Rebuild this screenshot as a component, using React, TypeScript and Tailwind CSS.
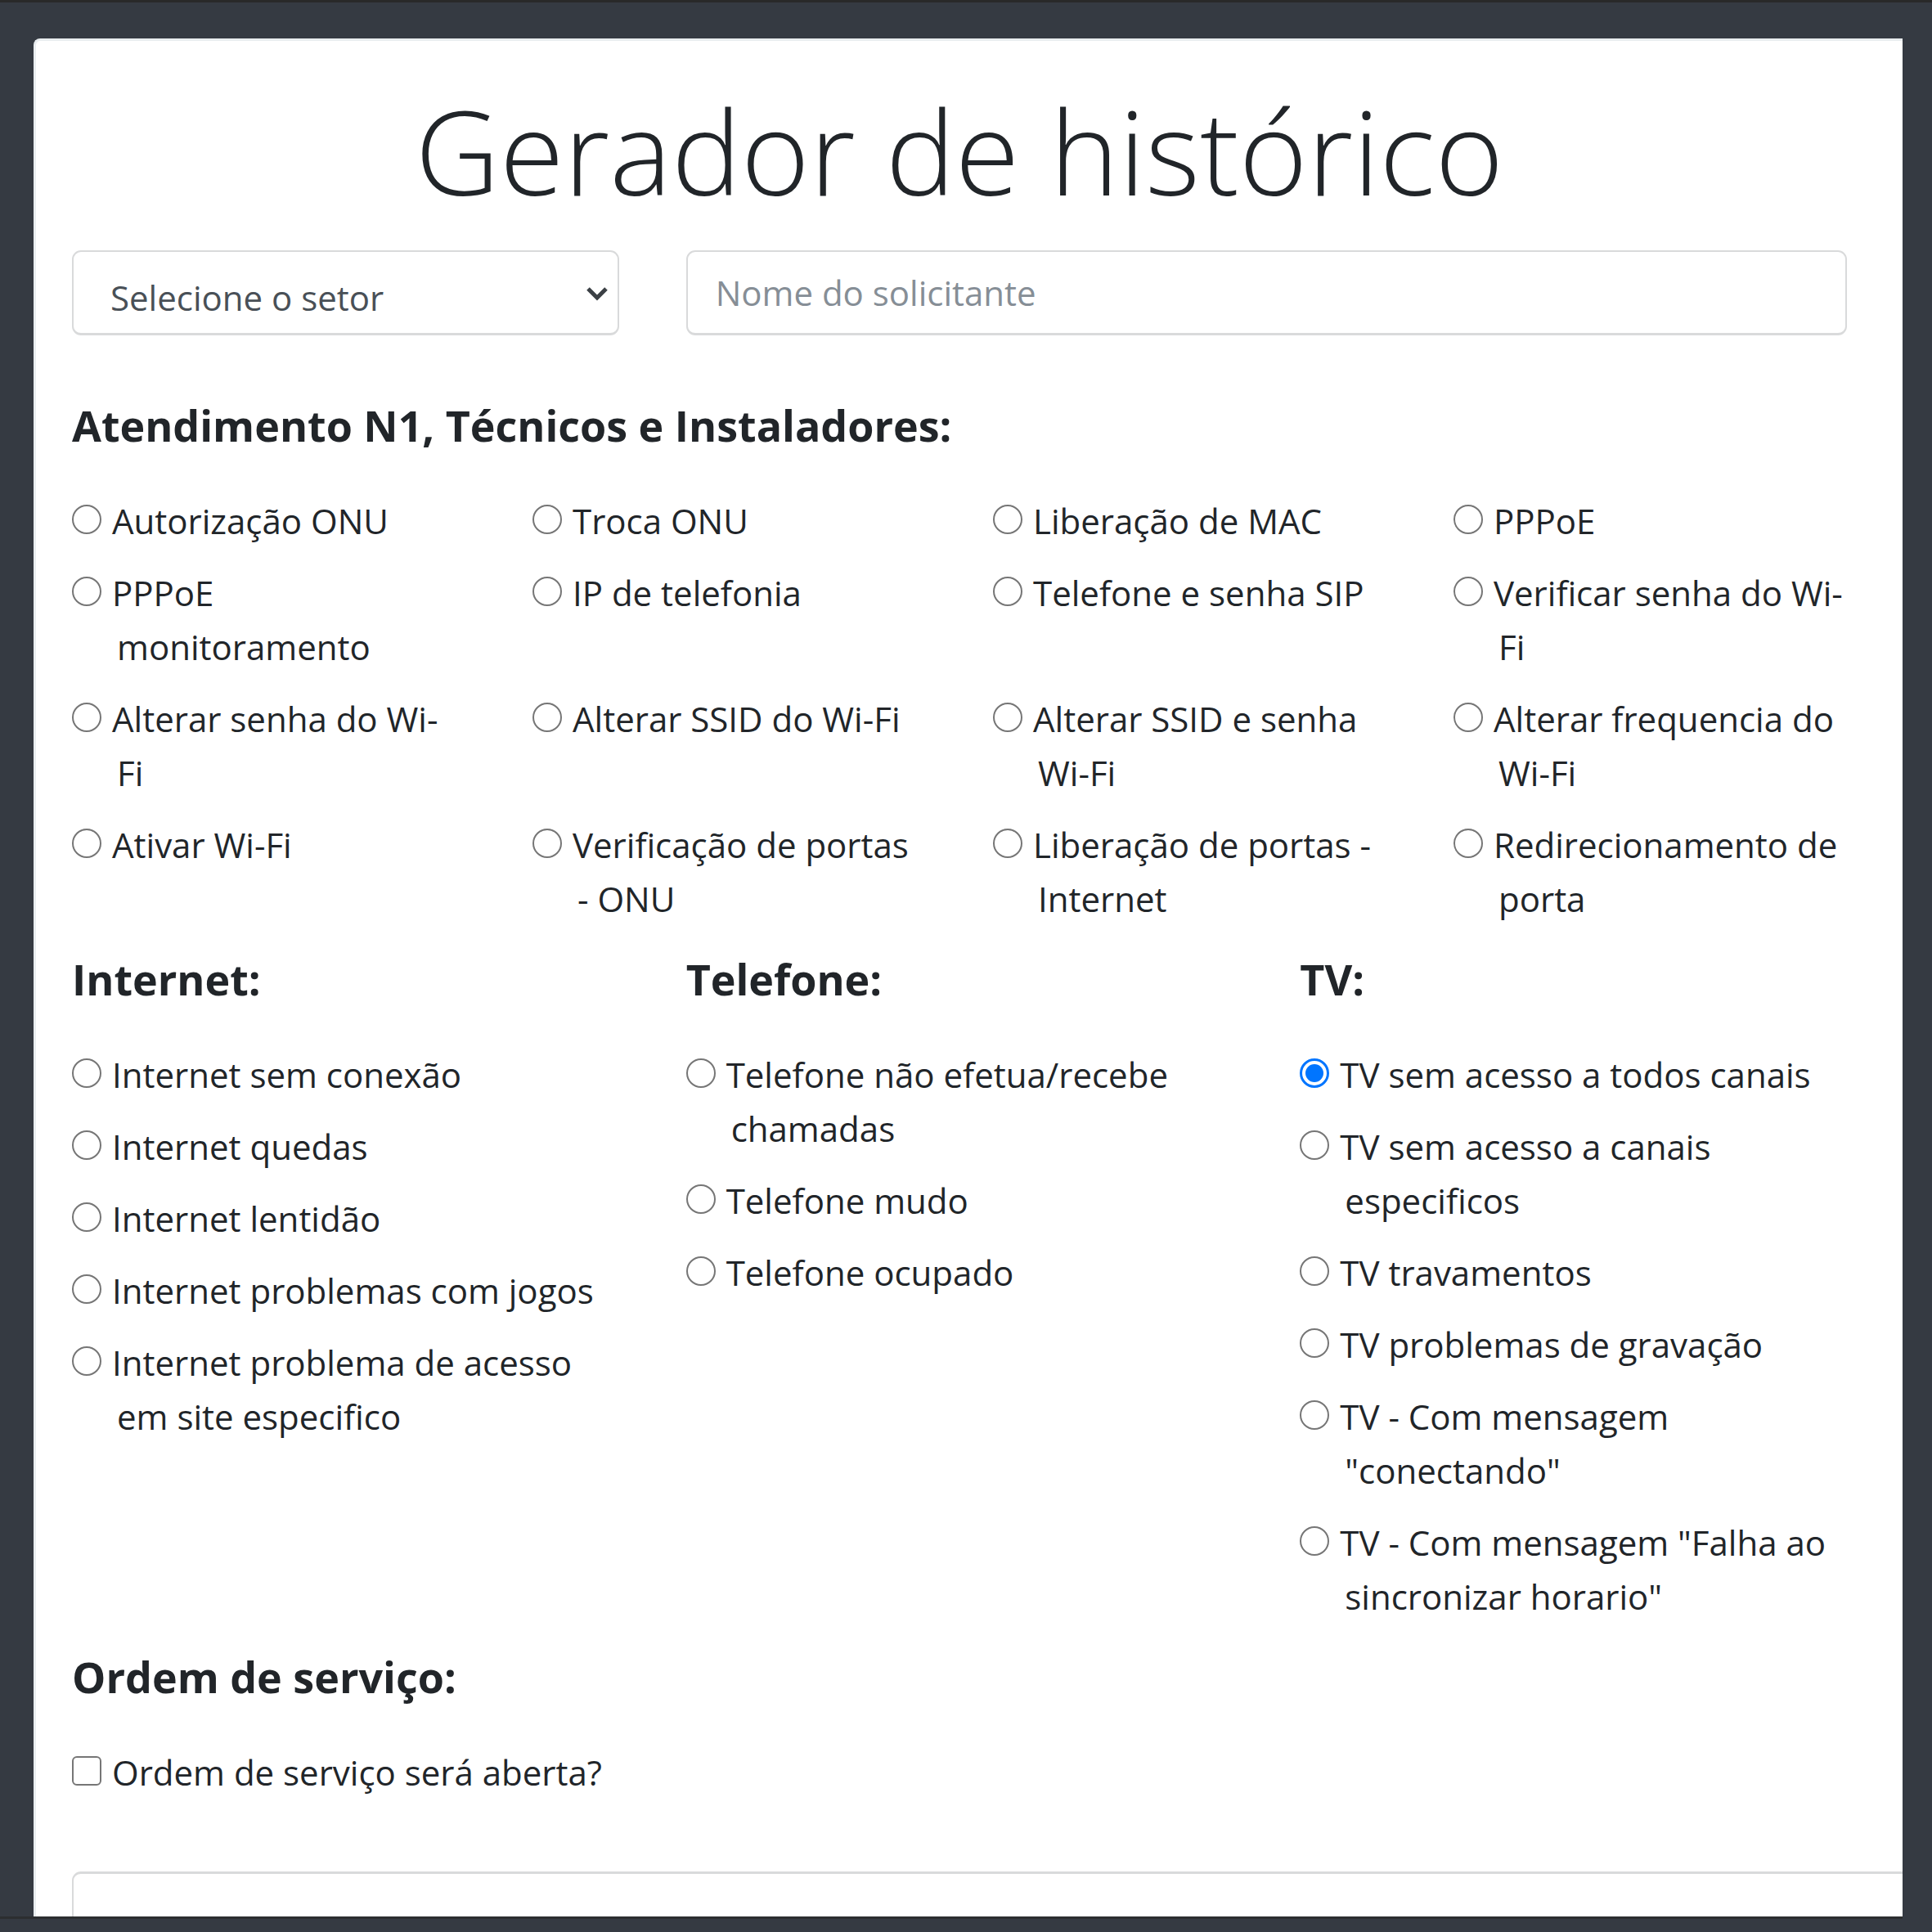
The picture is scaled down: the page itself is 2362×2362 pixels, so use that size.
import { useState } from "react";

const support = [
  "Autorização ONU",
  "Troca ONU",
  "Liberação de MAC",
  "PPPoE",
  "PPPoE\nmonitoramento",
  "IP de telefonia",
  "Telefone e senha SIP",
  "Verificar senha do Wi-\nFi",
  "Alterar senha do Wi-\nFi",
  "Alterar SSID do Wi-Fi",
  "Alterar SSID e senha Wi-Fi",
  "Alterar frequencia do Wi-Fi",
  "Ativar Wi-Fi",
  "Verificação de portas\n- ONU",
  "Liberação de portas - Internet",
  "Redirecionamento de porta",
];

const groups = [
  {
    title: "Internet:",
    options: [
      "Internet sem conexão",
      "Internet quedas",
      "Internet lentidão",
      "Internet problemas com jogos",
      "Internet problema de acesso\nem site especifico",
    ],
  },
  {
    title: "Telefone:",
    options: [
      "Telefone não efetua/recebe chamadas",
      "Telefone mudo",
      "Telefone ocupado",
    ],
  },
  {
    title: "TV:",
    options: [
      "TV sem acesso a todos canais",
      "TV sem acesso a canais especificos",
      "TV travamentos",
      "TV problemas de gravação",
      'TV - Com mensagem "conectando"',
      'TV - Com mensagem "Falha ao sincronizar horario"',
    ],
  },
];

type OptionProps = {
  label: string;
  selected: string;
  onSelect: (label: string) => void;
};

function Option({ label, selected, onSelect }: OptionProps) {
  return (
    <label className="mb-[22px] block pl-[55px] whitespace-pre-line">
      <input
        type="radio"
        name="motivo"
        value={label}
        checked={selected === label}
        onChange={() => onSelect(label)}
        className="-ml-[55px] mr-[13px] inline-block size-9 appearance-none rounded-full border-2 border-[#767676] bg-white align-baseline checked:border-[3px] checked:border-[#0075ff] checked:bg-[#0075ff] checked:bg-clip-content checked:p-1"
      />
      {label}
    </label>
  );
}

function Heading({ children }: { children: string }) {
  return <h2 className="text-[52px] leading-[66px] font-bold">{children}</h2>;
}

export default function App() {
  const [selected, setSelected] = useState("TV sem acesso a todos canais");
  const [order, setOrder] = useState(false);

  return (
    <div className="flex h-screen flex-col overflow-hidden border-t-[3px] border-[#292929] bg-[#353a42] pt-11 font-['Open_Sans',sans-serif] text-[42px] leading-[66px] text-[#212529]">
      <main className="mr-9 ml-[41px] min-h-0 flex-1 overflow-hidden rounded-tl-[8px] border-t-[3px] border-l-[3px] border-[#e9edf0] bg-white pr-[68px] pl-11">
        <h1 className="mt-[41px] text-center text-[143px] leading-[185px] font-light">
          Gerador de histórico
        </h1>

        <form>
          <div className="mt-[30px] grid grid-cols-3 gap-x-[82px]">
            <div className="relative">
              <select
                aria-label="Setor"
                className="block h-[104px] w-full appearance-none rounded-[11px] border-2 border-b-[3px] border-[#d9dadb] bg-white pt-[13px] pr-20 pl-[45px] text-[#495057]"
              >
                <option>Selecione o setor</option>
                <option>Atendimento</option>
                <option>Suporte</option>
              </select>
              <svg
                viewBox="0 0 28 18"
                className="pointer-events-none absolute top-[44px] right-[13px] h-[18px] w-7"
                fill="none"
                stroke="#3b4045"
                strokeWidth="5"
                aria-hidden="true"
              >
                <path d="M3 3l11 11L25 3" />
              </svg>
            </div>
            <input
              type="text"
              aria-label="Nome do solicitante"
              placeholder="Nome do solicitante"
              className="col-span-2 block h-[104px] w-full rounded-[11px] border-2 border-b-[3px] border-[#d9dadb] bg-white px-[34px] placeholder:text-[#868e96]"
            />
          </div>

          <section className="mt-[77px]">
            <Heading>Atendimento N1, Técnicos e Instaladores:</Heading>
            <div className="mt-[51px] grid grid-cols-4 gap-x-[82px]">
              {support.map((label) => (
                <Option key={label} label={label} selected={selected} onSelect={setSelected} />
              ))}
            </div>
          </section>

          <div className="mt-[10px] grid grid-cols-3 gap-x-[82px]">
            {groups.map((group) => (
              <section key={group.title}>
                <Heading>{group.title}</Heading>
                <div className="mt-[51px]">
                  {group.options.map((label) => (
                    <Option key={label} label={label} selected={selected} onSelect={setSelected} />
                  ))}
                </div>
              </section>
            ))}
          </div>

          <section className="mt-[10px]">
            <Heading>Ordem de serviço:</Heading>
            <label className="mt-[51px] block pl-[55px]">
              <input
                type="checkbox"
                checked={order}
                onChange={(e) => setOrder(e.target.checked)}
                className="-ml-[55px] mr-[13px] inline-block size-9 appearance-none rounded-[6px] border-2 border-[#767676] bg-white align-baseline checked:bg-[#0075ff]"
              />
              Ordem de serviço será aberta?
            </label>
          </section>

          <textarea
            aria-label="Histórico"
            className="mt-[88px] -mr-[90px] block h-[400px] w-[calc(100%+90px)] resize-none rounded-[11px] border-2 border-t-[3px] border-[#d9dadb] bg-white px-[34px] py-4"
          />
        </form>
      </main>
      <footer className="mr-9 h-[19px] shrink-0 border-t-[3px] border-[#2c2e30]" />
    </div>
  );
}
